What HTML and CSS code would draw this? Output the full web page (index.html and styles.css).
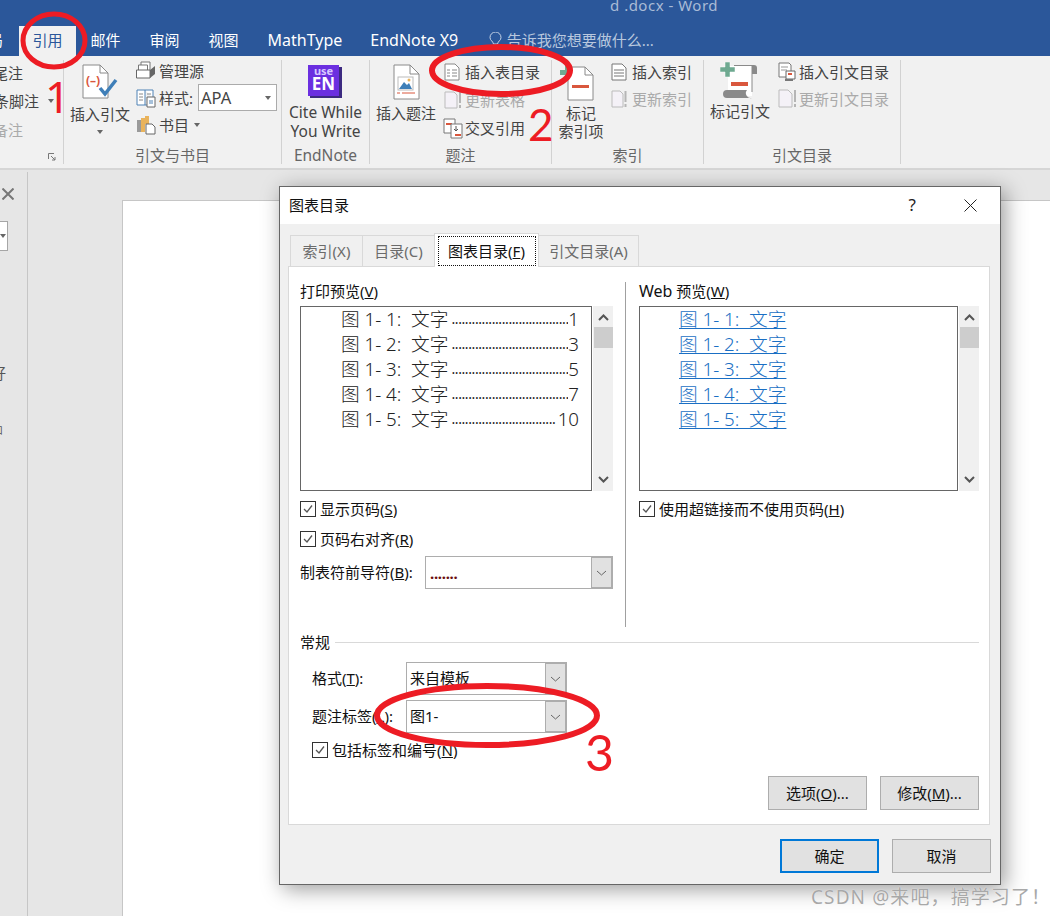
FILE: index.html
```html
<!DOCTYPE html>
<html lang="zh-CN">
<head>
<meta charset="utf-8">
<title>d .docx - Word</title>
<link rel="stylesheet" href="styles.css">
</head>
<body>
<div class="app">
  <header class="titlebar">
    <div class="doc-title">d .docx - Word</div>
    <nav class="tabs">
      <span class="tab tab-cut">局</span>
      <span class="tab tab-active">引用</span>
      <span class="tab">邮件</span>
      <span class="tab">审阅</span>
      <span class="tab">视图</span>
      <span class="tab tab-latin">MathType</span>
      <span class="tab tab-latin">EndNote X9</span>
      <span class="tell">
        <svg class="bulb" width="13" height="16" viewBox="0 0 13 16"><path d="M4.500 12C4 9 1 8.500 1 5.500A5.500 5.500 0 0 1 12 5.500C12 8.500 9 9 8.500 12ZM5 14H8" fill="none" stroke="#c6d3e6" stroke-width="1"/></svg>
        <span>告诉我您想要做什么...</span>
      </span>
    </nav>
  </header>

  <section class="ribbon">
    <div class="group g0">
      <div class="g0-body">
        <span class="g0-a">尾注</span>
        <span class="g0-b">条脚注<i class="caret caret-g0"></i></span>
        <span class="g0-c">备注</span>
      </div>
      <svg class="launcher" width="8" height="8" viewBox="0 0 8 8"><path d="M.5 6V.5H6M3 3L7 7M7 4V7H4" fill="none" stroke="#777"/></svg>
    </div>

    <div class="group g1">
      <div class="body">
        <div class="large l-cite">
          <svg width="36" height="37" viewBox="0 0 36 37"><path d="M1 1H18L26 9V34H1Z" fill="#fff" stroke="#8a8a8a"/><path d="M18 1V9H26" fill="none" stroke="#8a8a8a"/><text class="cite-mark" x="4" y="21">(–)</text><path d="M18 24L23 30L34 16" fill="none" stroke="#3f7fb8" stroke-width="3.500"/></svg>
          <span>插入引文</span>
          <i class="caret"></i>
        </div>
        <div class="small-col c-cite">
          <div class="row"><svg width="20" height="19" viewBox="0 0 20 19"><path d="M5 1H14V13H5Z" fill="#fff" stroke="#777"/><path d="M2.500 4H11.500V10H2.500Z" fill="#fff" stroke="#777"/><path d="M.5 9H14V17H.5Z" fill="#fff" stroke="#666"/><path d="M14 9L19 5V13L14 17Z" fill="#666"/></svg><span>管理源</span></div>
          <div class="row"><svg width="20" height="20" viewBox="0 0 20 20"><path d="M1 2H9V17H1ZM9 2H17V10M9 17H11" fill="#fff" stroke="#4f82b5"/><path d="M3 6H7M3 9H7M3 12H7M11 6H15" stroke="#888"/><path d="M11 9H19V19H11Z" fill="#fff" stroke="#666"/><path d="M13 13H17M13 15H17" stroke="#4f82b5"/></svg><span>样式:</span><span class="combo"><span class="apa">APA</span><i class="caret"></i></span></div>
          <div class="row"><svg width="20" height="20" viewBox="0 0 20 20"><path d="M1 5H5V17H1Z" fill="#9a9a9a"/><path d="M5 3H9V17H5Z" fill="#e9b35c"/><path d="M9 1H13V9H9Z" fill="#e9b35c"/><path d="M10 9H16L19 12V19H10Z" fill="#fff" stroke="#666"/></svg><span>书目</span><i class="caret caret-gap"></i></div>
        </div>
      </div>
      <div class="group-label">引文与书目</div>
    </div>

    <div class="group g2">
      <div class="body en-body">
        <svg class="en-logo" width="36" height="36" viewBox="0 0 36 36"><path d="M6 3H35V34H3V31Z" fill="#3c2a80"/><rect x="1" y="1" width="31" height="31" fill="#6b2fe0"/><text class="en-use" x="16.500" y="11">use</text><text class="en-en" x="16.500" y="26">EN</text></svg>
        <div class="en-text">Cite While<br>You Write</div>
      </div>
      <div class="group-label en-label">EndNote</div>
    </div>

    <div class="group g3">
      <div class="body">
        <div class="large l-cap">
          <svg width="27" height="36" viewBox="0 0 27 36"><path d="M1 1H17L26 10V35H1Z" fill="#fff" stroke="#8a8a8a"/><path d="M17 1V10H26" fill="none" stroke="#8a8a8a"/><rect x="5" y="13" width="15" height="13" fill="#fff" stroke="#bbb"/><path d="M6 25L11 18L14 21L16 19L19 25Z" fill="#3f7fb8"/><circle cx="16" cy="16" r="1.500" fill="#e9b35c"/><path d="M4 29H7M9 29H22" stroke="#d9573d"/></svg>
          <span>插入题注</span>
        </div>
        <div class="small-col c-cap">
          <div class="row row28"><svg width="20" height="18" viewBox="0 0 20 18"><path d="M2 1H12L16 5V17H2Z" fill="#fff" stroke="#888"/><path d="M4 7H7M9 7H14M4 10H7M9 10H14M4 13H7M9 13H14" stroke="#888"/></svg><span>插入表目录</span></div>
          <div class="row row28 disabled"><svg width="20" height="18" viewBox="0 0 20 18"><path d="M2 1H11L14 4V17H2Z" fill="#f4f1f7" stroke="#bbb"/><path d="M17 1V12M17 14V17" stroke="#b5b5b5" stroke-width="2"/></svg><span>更新表格</span></div>
          <div class="row row28"><svg width="20" height="21" viewBox="0 0 20 21"><path d="M1 1H12V15H1Z" fill="#fff" stroke="#777"/><path d="M3 6H9" stroke="#d9573d" stroke-width="2"/><path d="M8 6H19V20H8Z" fill="#fff" stroke="#777"/><path d="M13 8V13M11 11L13 13L15 11" fill="none" stroke="#555"/><path d="M12 17H18" stroke="#d9573d" stroke-width="2"/></svg><span>交叉引用</span></div>
        </div>
      </div>
      <div class="group-label">题注</div>
    </div>

    <div class="group g4">
      <div class="body">
        <div class="large l-idx">
          <svg width="34" height="36" viewBox="0 0 34 36"><path d="M0 5H5V0H10V5H15V10H10V15H5V10H0Z" fill="#6ea990"/><path d="M8 2H25L33 10V35H8Z" fill="#fff" stroke="#8a8a8a"/><path d="M25 2V10H33" fill="none" stroke="#8a8a8a"/><rect x="12" y="20" width="17" height="3" fill="#d9573d"/></svg>
          <span>标记<br>索引项</span>
        </div>
        <div class="small-col c-idx">
          <div class="row"><svg width="16" height="18" viewBox="0 0 16 18"><path d="M1 1H11L15 5V17H1Z" fill="#fff" stroke="#777"/><path d="M3 7H13M3 10H13M3 13H13" stroke="#777"/></svg><span>插入索引</span></div>
          <div class="row disabled"><svg width="16" height="18" viewBox="0 0 16 18"><path d="M1 1H9L12 4V17H1Z" fill="#f4f1f7" stroke="#bbb"/><path d="M14.500 1V12M14.500 14V17" stroke="#b5b5b5" stroke-width="2"/></svg><span>更新索引</span></div>
        </div>
      </div>
      <div class="group-label">索引</div>
    </div>

    <div class="group g5">
      <div class="body">
        <div class="large l-mark">
          <svg width="40" height="37" viewBox="0 0 40 37"><path d="M8 4H32V34H8Z" fill="#fff"/><path d="M14 3.500H33M32 4V30" fill="none" stroke="#8a8a8a"/><path d="M32 3H34A3 3 0 0 1 37 6V12H32Z" fill="#8a8a8a"/><path d="M7 28H27A5 5 0 0 0 32 36H7A4 4 0 0 1 7 28Z" fill="#8a8a8a"/><path d="M5 0H10V5H15V10H10V15H5V10H0V5H5Z" fill="#6ea990" stroke="#fff" stroke-width=".5"/><rect x="11" y="20" width="17" height="4" fill="#d9573d"/></svg>
          <span>标记引文</span>
        </div>
        <div class="small-col c-mark">
          <div class="row"><svg width="19" height="20" viewBox="0 0 19 20"><path d="M1 1H11L13 3V15H1Z" fill="#fff" stroke="#777"/><path d="M3 5H10M3 8H9" stroke="#999"/><path d="M8 9H17V17H8Z" fill="#fff" stroke="#666"/><path d="M10 12H14" stroke="#d9573d" stroke-width="2"/><path d="M7 17H15V19H7Z" fill="#777"/></svg><span>插入引文目录</span></div>
          <div class="row disabled"><svg width="19" height="19" viewBox="0 0 19 19"><path d="M1 1H10L14 5V18H1Z" fill="#f4f1f7" stroke="#bbb"/><path d="M17 1V13M17 15V18" stroke="#b5b5b5" stroke-width="2"/></svg><span>更新引文目录</span></div>
        </div>
      </div>
      <div class="group-label">引文目录</div>
    </div>
  </section>

  <main class="workspace">
    <aside class="sidebar">
      <svg class="side-x" width="12" height="12" viewBox="0 0 12 12"><path d="M.5.5L11.500 11.500M11.500.5L.5 11.500" stroke="#777" stroke-width="2"/></svg>
      <div class="side-box"><i class="caret"></i></div>
      <span class="side-a">好</span>
      <span class="side-b">口</span>
    </aside>
    <div class="canvas"><div class="page"></div></div>
  </main>

  <div class="dialog">
    <div class="dlg-title">
      <span class="dlg-name">图表目录</span>
      <span class="dlg-help">?</span>
      <svg class="dlg-close" width="13" height="13" viewBox="0 0 13 13"><path d="M.5.5L12.500 12.500M12.500.5L.5 12.500" stroke="#222"/></svg>
    </div>
    <div class="dlg-body">
      <div class="dlg-tabs">
        <span class="dtab">索引(X)</span>
        <span class="dtab">目录(C)</span>
        <span class="dtab dtab-active"><span class="focus">图表目录(<u>F</u>)</span></span>
        <span class="dtab">引文目录(A)</span>
      </div>
      <div class="panel">
        <div class="cols">
          <div class="col col-left">
            <div class="label">打印预览(<u>V</u>)</div>
            <div class="list-wrap">
              <div class="list">
                <div class="entry"><span>图 1- 1:&nbsp; 文字</span><span class="dots">...................................</span><span>1</span></div>
                <div class="entry"><span>图 1- 2:&nbsp; 文字</span><span class="dots">...................................</span><span>3</span></div>
                <div class="entry"><span>图 1- 3:&nbsp; 文字</span><span class="dots">...................................</span><span>5</span></div>
                <div class="entry"><span>图 1- 4:&nbsp; 文字</span><span class="dots">...................................</span><span>7</span></div>
                <div class="entry"><span>图 1- 5:&nbsp; 文字</span><span class="dots">...............................</span><span>10</span></div>
              </div>
              <div class="scroll">
                <svg width="11" height="7" viewBox="0 0 11 7"><path d="M1 6L5.500 1.500L10 6" fill="none" stroke="#555" stroke-width="2"/></svg>
                <i class="thumb"></i>
                <svg class="down" width="11" height="7" viewBox="0 0 11 7"><path d="M1 1L5.500 5.500L10 1" fill="none" stroke="#555" stroke-width="2"/></svg>
              </div>
            </div>
            <label class="check chk-first"><i class="box"><svg width="14" height="14" viewBox="0 0 14 14"><path d="M3 7L6 10L11 3.500" fill="none" stroke="#555" stroke-width="1.300"/></svg></i><span>显示页码(<u>S</u>)</span></label>
            <label class="check chk-second"><i class="box"><svg width="14" height="14" viewBox="0 0 14 14"><path d="M3 7L6 10L11 3.500" fill="none" stroke="#555" stroke-width="1.300"/></svg></i><span>页码右对齐(<u>R</u>)</span></label>
            <div class="field tab-field">
              <span class="field-label">制表符前导符(<u>B</u>):</span>
              <div class="select sel-leader"><span class="leader">.......</span><span class="sel-btn"><svg width="11" height="6" viewBox="0 0 11 6"><path d="M1 1L5.500 5L10 1" fill="none" stroke="#666"/></svg></span></div>
            </div>
          </div>
          <div class="vline"></div>
          <div class="col col-right">
            <div class="label"><span class="web-word">Web</span> 预览(<u>W</u>)</div>
            <div class="list-wrap">
              <div class="list list-web">
                <div class="entry"><a>图 1- 1:&nbsp; 文字</a></div>
                <div class="entry"><a>图 1- 2:&nbsp; 文字</a></div>
                <div class="entry"><a>图 1- 3:&nbsp; 文字</a></div>
                <div class="entry"><a>图 1- 4:&nbsp; 文字</a></div>
                <div class="entry"><a>图 1- 5:&nbsp; 文字</a></div>
              </div>
              <div class="scroll">
                <svg width="11" height="7" viewBox="0 0 11 7"><path d="M1 6L5.500 1.500L10 6" fill="none" stroke="#555" stroke-width="2"/></svg>
                <i class="thumb"></i>
                <svg class="down" width="11" height="7" viewBox="0 0 11 7"><path d="M1 1L5.500 5.500L10 1" fill="none" stroke="#555" stroke-width="2"/></svg>
              </div>
            </div>
            <label class="check chk-first"><i class="box"><svg width="14" height="14" viewBox="0 0 14 14"><path d="M3 7L6 10L11 3.500" fill="none" stroke="#555" stroke-width="1.300"/></svg></i><span>使用超链接而不使用页码(<u>H</u>)</span></label>
          </div>
        </div>
        <div class="legend"><span>常规</span><i></i></div>
        <div class="general">
          <div class="field gen-first">
            <span class="gen-label">格式(<u>T</u>):</span>
            <div class="select sel-gen"><span class="sel-text">来自模板</span><span class="sel-btn"><svg width="11" height="6" viewBox="0 0 11 6"><path d="M1 1L5.500 5L10 1" fill="none" stroke="#666"/></svg></span></div>
          </div>
          <div class="field gen-second">
            <span class="gen-label">题注标签(<u>L</u>):</span>
            <div class="select sel-gen"><span class="sel-text">图1-</span><span class="sel-btn"><svg width="11" height="6" viewBox="0 0 11 6"><path d="M1 1L5.500 5L10 1" fill="none" stroke="#666"/></svg></span></div>
          </div>
          <label class="check chk-gen"><i class="box"><svg width="14" height="14" viewBox="0 0 14 14"><path d="M3 7L6 10L11 3.500" fill="none" stroke="#555" stroke-width="1.300"/></svg></i><span>包括标签和编号(<u>N</u>)</span></label>
        </div>
        <div class="panel-btns">
          <span class="btn"><span>选项(<u>O</u>)...</span></span>
          <span class="btn"><span>修改(<u>M</u>)...</span></span>
        </div>
      </div>
      <div class="dlg-foot">
        <span class="btn btn-default">确定</span>
        <span class="btn">取消</span>
      </div>
    </div>
  </div>

  <svg class="marks" width="1050" height="916" viewBox="0 0 1050 916">
    <ellipse cx="54" cy="40.500" rx="31" ry="26.500" class="ring ring-thin"/>
    <ellipse cx="501" cy="70.500" rx="69" ry="23.500" class="ring"/>
    <ellipse cx="487" cy="715.500" rx="110" ry="29.500" class="ring"/>
    <text x="45" y="113" class="num num-one">1</text>
    <text x="528" y="141" class="num">2</text>
    <text x="585" y="771" class="num num-big">3</text>
  </svg>

  <div class="watermark">CSDN @来吧，搞学习了！</div>
</div>
</body>
</html>
```
FILE: styles.css
```css
* { box-sizing: border-box; }
html, body { margin: 0; padding: 0; }
body {
  font-family: "Noto Sans", "Noto Sans CJK SC", sans-serif;
  font-size: 15px;
  line-height: 18px;
  color: #111;
  overflow: hidden;
}
i { display: block; font-style: normal; }
u { text-decoration: underline; text-underline-offset: 1px; }
svg { display: block; flex: none; }

.app {
  position: relative;
  width: 1050px;
  height: 916px;
  overflow: hidden;
  display: flex;
  flex-direction: column;
  background: #e6e6e6;
}

/* title bar and tabs */
.titlebar { height: 56px; background: #2b579a; flex: none; }
.doc-title {
  height: 26px;
  padding-left: 610px;
  color: #a9bbd6;
  line-height: 10px;
  letter-spacing: .5px;
}
.tabs { display: flex; height: 30px; align-items: stretch; color: #fff; }
.tab { display: flex; align-items: center; justify-content: center; padding: 0 14.500px 2px; }
.tab-latin { font-size: 16px; }
.tab-latin + .tab-latin { margin-left: -1px; }
.tab-cut { width: 19px; padding: 0 16px 2px 0; justify-content: flex-end; white-space: nowrap; }
.tab-active { background: #f1f1f1; color: #2b579a; width: 57px; padding: 0 0 2px; }
.tell { display: flex; align-items: center; gap: 5px; margin-left: 16px; padding-bottom: 2px; color: #b9c8de; }

/* ribbon */
.ribbon {
  flex: none;
  display: flex;
  height: 114px;
  background: #f1f1f1;
  border-bottom: 2px solid #d6d6d6;
  color: #444;
}
.group {
  position: relative;
  flex: none;
  display: flex;
  flex-direction: column;
  height: 104px;
  margin-top: 4px;
  border-right: 1px solid #d2d2d2;
}
.g0 { width: 64px; }
.g1 { width: 218px; }
.g2 { width: 88px; }
.g3 { width: 182px; }
.g4 { width: 152px; }
.g5 { width: 197px; }
.body { display: flex; height: 88px; }
.group-label { text-align: center; color: #666; line-height: 18px; margin-top: 4px; }
.en-label { font-size: 15.500px; }

.g0-body { display: flex; flex-direction: column; align-items: flex-end; white-space: nowrap; padding-top: 4px; height: 88px; }
.g0-a { margin-right: 40px; }
.g0-b { margin-right: 9px; margin-top: 10px; display: flex; align-items: center; }
.g0-c { margin-right: 40px; margin-top: 11px; color: #aaa; }
.launcher { position: absolute; right: 7px; bottom: 3px; }

.caret { width: 0; height: 0; border: 3.500px solid transparent; border-top: 4px solid #666; border-bottom: 0; }
.caret-g0 { margin-left: 9px; }
.caret-gap { margin-left: 2px; }

.large { display: flex; flex-direction: column; align-items: center; text-align: center; flex: none; }
.large span { margin-top: 4px; }
.large .caret { margin-top: 7px; }
.l-cite { width: 60px; margin-left: 6px; padding-top: 4px; }
.l-cap { width: 60px; margin-left: 6px; padding-top: 4px; }
.l-idx { width: 60px; margin-left: -1px; padding-top: 5px; }
.l-idx svg { margin-right: 8px; }
.l-idx span { margin-top: 3px; }
.l-mark { width: 60px; margin-left: 6px; padding-top: 2px; }
.l-mark span { margin-top: 3px; }

.small-col { display: flex; flex-direction: column; margin-top: -2px; }
.row { display: flex; align-items: center; gap: 3px; height: 27px; white-space: nowrap; }
.row28 { height: 28px; }
.c-cite { margin-left: 6px; margin-top: -3px; }
.c-cap { margin-left: 7px; }
.c-cap .row { gap: 2px; }
.c-idx { margin-left: 0; }
.c-idx .row { gap: 5px; }
.c-mark { margin-left: 8px; }
.c-mark .row { gap: 2px; }
.disabled { color: #aaa; }

.combo {
  display: flex;
  align-items: center;
  justify-content: space-between;
  width: 79px;
  height: 27px;
  margin-left: 2px;
  padding: 0 5px 0 2px;
  background: #fff;
  border: 1px solid #ababab;
}
.apa { font-size: 16.500px; }

.cite-mark { font-size: 12px; font-weight: 700; fill: #d9573d; }
.en-body { flex-direction: column; align-items: center; padding-top: 4px; }
.en-logo { margin-right: 2px; }
.en-text { margin-top: 3px; text-align: center; line-height: 19px; white-space: nowrap; font-size: 15.500px; }
.en-use { font-size: 11px; font-weight: 700; fill: #d8c8ff; text-anchor: middle; }
.en-en { font-size: 17px; font-weight: 700; fill: #fff; text-anchor: middle; }

/* workspace */
.workspace { flex: 1; display: flex; background: #e6e6e6; min-height: 0; }
.sidebar {
  position: relative;
  flex: none;
  width: 28px;
  border-right: 1px solid #c6c6c6;
  display: flex;
  flex-direction: column;
  align-items: flex-end;
  margin-top: 2px;
  color: #555;
}
.side-x { margin: 16px 13px 0 0; }
.side-box { display: flex; align-items: center; justify-content: flex-end; width: 30px; height: 30px; margin: 21px 19px 0 0; padding-right: 1px; background: #fff; border: 1px solid #a6a6a6; }
.side-a { margin: 113px 21px 0 0; }
.side-b { margin: 39px 24px 0 0; font-size: 10px; }
.canvas { flex: 1; padding: 30px 0 0 94px; }
.page { height: 100%; background: #fff; border: 1px solid #c6c6c6; border-right: 0; border-bottom: 0; }

/* dialog */
.dialog {
  position: absolute;
  left: 279px;
  top: 186px;
  width: 722px;
  height: 699px;
  display: flex;
  flex-direction: column;
  border: 1px solid #666;
  background: #f0f0f0;
  box-shadow: 4px 4px 20px rgba(0, 0, 0, .4);
}
.dlg-title { flex: none; display: flex; align-items: center; height: 37px; padding: 0 0 2px 9px; background: #fff; color: #111; }
.dlg-name { flex: 1; }
.dlg-help { margin-right: 48px; color: #222; font-size: 17px; }
.dlg-close { margin: 2px 23px 0 0; }
.dlg-body { flex: 1; padding: 9px 9px 0 8px; }
.dlg-tabs { display: flex; align-items: flex-end; height: 33px; padding-left: 2px; }
.dtab {
  display: flex;
  align-items: center;
  justify-content: center;
  width: 73px;
  height: 31px;
  color: #6b6b6b;
  border: 1px solid #d9d9d9;
  border-bottom: 0;
  margin-right: -1px;
}
.dtab:nth-child(4) { width: 101px; }
.dtab-active {
  position: relative;
  z-index: 1;
  width: 105px;
  height: 34px;
  margin-bottom: -1px;
  background: #fff;
  color: #111;
}
.focus { display: block; width: 96px; height: 28px; line-height: 28px; text-align: center; outline: 1px dotted #111; white-space: nowrap; }

.panel {
  width: 702px;
  height: 559px;
  padding: 0 10px 0 11px;
  background: #fff;
  border: 1px solid #d9d9d9;
}
.cols { display: flex; height: 360px; }
.col { padding-top: 15px; }
.col-left { width: 313px; }
.col-right { width: 341px; }
.vline { width: 1px; height: 345px; margin: 15px 13px 0 12px; background: #a0a0a0; }
.label { height: 18px; white-space: nowrap; }
.web-word { font-size: 16px; }

.list-wrap { display: flex; height: 185px; margin-top: 6px; }
.list {
  flex: 1;
  min-width: 0;
  padding: 0 12px 0 40px;
  background: #fff;
  border: 1px solid #666;
  font-size: 18.700px;
  line-height: 25px;
  font-weight: 300;
  color: #222;
  margin-right: 1px;
}
.list-web { padding-left: 39px; }
.entry { display: flex; white-space: pre; }
.entry:first-child { margin-top: -1px; }
.dots { flex: 1; min-width: 0; overflow: hidden; margin-left: 3px; font-size: 14px; letter-spacing: -.4px; font-weight: 400; }
.list-web a { color: #1a6fc4; text-decoration: underline; text-underline-offset: 2px; }
.scroll { position: relative; flex: none; width: 20px; display: flex; flex-direction: column; align-items: center; background: #f0f0f0; padding-top: 8px; }
.thumb { width: 19px; height: 21px; margin-top: 6px; background: #cdcdcd; }
.down { margin-top: auto; margin-bottom: 8px; }

.check { display: flex; align-items: center; gap: 4px; height: 18px; white-space: nowrap; }
.box { display: block; width: 16px; height: 16px; background: #fff; border: 1px solid #333; flex: none; }
.chk-first { margin-top: 9px; }
.chk-second { margin-top: 12px; }
.field { display: flex; align-items: center; white-space: nowrap; }
.tab-field { margin-top: 8px; }
.field-label { width: 125px; padding-bottom: 2px; }
.select {
  display: flex;
  align-items: center;
  height: 33px;
  background: #fff;
  border: 1px solid #adadad;
}
.sel-leader { width: 188px; }
.sel-gen { width: 161px; }
.leader { flex: 1; padding-left: 4px; color: #6b0f0f; font-weight: 700; letter-spacing: -.3px; }
.sel-text { flex: 1; padding: 0 0 2px 3px; }
.sel-btn { display: flex; align-items: center; justify-content: center; flex: none; width: 22px; height: 33px; margin: -1px -1px -1px 0; background: #e1e1e1; border: 2px solid #adadad; border-left-width: 1px; }

.legend { display: flex; align-items: center; gap: 5px; height: 18px; margin-top: 6px; }
.legend i { flex: 1; height: 1px; background: #d9d9d9; }
.general { padding-left: 12px; }
.gen-first { margin-top: 11px; }
.gen-second { margin-top: 5px; }
.gen-label { width: 94px; padding-bottom: 2px; }
.chk-gen { margin-top: 8px; }
.panel-btns { display: flex; justify-content: flex-end; gap: 13px; margin-top: 17px; }

.btn {
  display: flex;
  align-items: center;
  justify-content: center;
  width: 99px;
  height: 34px;
  background: #e1e1e1;
  border: 1px solid #adadad;
  white-space: pre;
}
.btn-default { border: 2px solid #0078d7; }
.dlg-foot { display: flex; justify-content: flex-end; gap: 13px; margin-top: 14px; }

/* hand-drawn marks over the screenshot */
.marks { position: absolute; left: 0; top: 0; pointer-events: none; }
.ring { fill: none; stroke: #ed1c24; stroke-width: 6; }
.ring-thin { stroke-width: 5; }
.num { font-family: "Lato", sans-serif; font-weight: 400; font-size: 44px; fill: #ed1c24; }
.num-one { font-family: "Noto Sans", sans-serif; }
.num-big { font-size: 50px; }

.watermark {
  position: absolute;
  left: 811px;
  top: 885px;
  font-size: 19px;
  letter-spacing: 1.100px;
  line-height: 24px;
  color: #a8a8a8;
  white-space: nowrap;
  text-shadow: 0 0 1px #fff;
}
```
